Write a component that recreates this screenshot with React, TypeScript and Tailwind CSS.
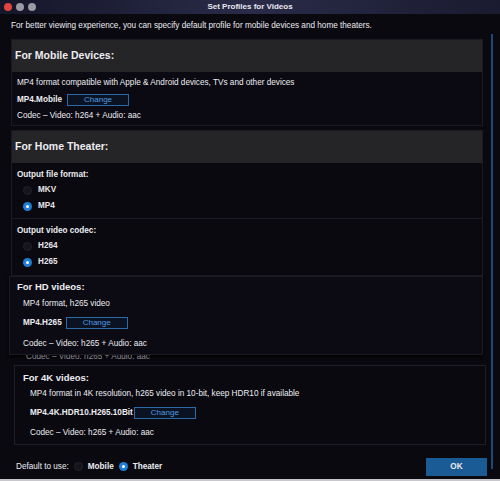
import type { FC } from 'react';

const Radio: FC<{ checked?: boolean }> = ({ checked }) =>
  checked ? (
    <span className="flex h-[9px] w-[9px] items-center justify-center rounded-full bg-[#1f7fd8]">
      <span className="h-[3px] w-[3px] rounded-full bg-white" />
    </span>
  ) : (
    <span className="h-[9px] w-[9px] rounded-full border border-[#23232c] bg-[#15141c]" />
  );

const ChangeButton: FC = () => (
  <span className="flex h-[12px] w-[62px] items-center justify-center border border-[#2b6aa6] bg-[#0b1322] text-[8px] text-[#4f9be2]">
    Change
  </span>
);

const RadioRow: FC<{ label: string; checked?: boolean }> = ({ label, checked }) => (
  <div className="flex h-[16px] items-center gap-[6px] pl-[6px]">
    <Radio checked={checked} />
    <span className="font-bold text-[#e4e4e8]">{label}</span>
  </div>
);

export default function App() {
  return (
    <div className="flex h-[481px] w-[500px] flex-col overflow-hidden bg-[#0a0910] font-['Liberation_Sans',Arial,sans-serif] text-[8.2px] text-[#ececf0]">
      {/* title bar */}
      <div className="relative flex h-[14px] shrink-0 items-center bg-gradient-to-r from-[#15162a] via-[#2a2b48] to-[#1a1b30]">
        <div className="flex gap-[4px] pl-[4px]">
          <span className="h-[8px] w-[8px] rounded-full bg-[#e0443e]" />
          <span className="h-[8px] w-[8px] rounded-full bg-[#9a9aa2]" />
          <span className="h-[8px] w-[8px] rounded-full bg-[#9a9aa2]" />
        </div>
        <span className="absolute left-0 right-0 text-center text-[8px] font-bold text-[#e8e8ee]">
          Set Profiles for Videos
        </span>
      </div>

      <div className="flex min-h-0 flex-1">
        <div className="flex min-w-0 flex-1 flex-col pl-[11px]">
          <div className="flex h-[25px] items-center">
            For better viewing experience, you can specify default profile for mobile devices and home theaters.
          </div>

          {/* mobile */}
          <div className="border border-[#1b1a22]">
            <div className="flex h-[32px] items-center bg-[#252528] pl-[3px] text-[10.5px] font-bold">
              For Mobile Devices:
            </div>
            <div className="bg-[#0b0a12] pb-[3px] pl-[5px] pt-[4px]">
              <div className="flex h-[14px] items-center">
                MP4 format compatible with Apple &amp; Android devices, TVs and other devices
              </div>
              <div className="flex h-[20px] items-center gap-[5px]">
                <span className="font-bold">MP4.Mobile</span>
                <ChangeButton />
              </div>
              <div className="flex h-[12px] items-center">Codec – Video: h264 + Audio: aac</div>
            </div>
          </div>

          {/* home theater */}
          <div className="mt-[4px] border-x border-t border-[#1b1a22]">
            <div className="flex h-[32px] items-center bg-[#252528] pl-[3px] text-[10.5px] font-bold">
              For Home Theater:
            </div>
            <div className="border-b border-[#1c1b23] pb-[4px] pl-[5px] pt-[5px]">
              <div className="flex h-[14px] items-center font-bold">Output file format:</div>
              <RadioRow label="MKV" />
              <RadioRow label="MP4" checked />
            </div>
            <div className="border-b border-[#1c1b23] pb-[5px] pl-[5px] pt-[5px]">
              <div className="flex h-[14px] items-center font-bold">Output video codec:</div>
              <RadioRow label="H264" />
              <RadioRow label="H265" checked />
            </div>
          </div>

          {/* HD */}
          <div className="-ml-[2px] border border-[#1c1b23] bg-[#0c0b13] pl-[7px] shadow-[0_2px_3px_#000]">
            <div className="flex h-[20px] items-center pt-[1px] text-[9.5px] font-bold">For HD videos:</div>
            <div className="pl-[6px]">
              <div className="flex h-[15px] items-center">MP4 format, h265 video</div>
              <div className="flex h-[22px] items-center gap-[4px]">
                <span className="font-bold">MP4.H265</span>
                <ChangeButton />
              </div>
              <div className="flex h-[20px] items-center">Codec – Video: h265 + Audio: aac</div>
            </div>
          </div>
          <div className="h-[8px] overflow-hidden pl-[15px]">
            <div className="-mt-[4px] text-[#8a8a92]">Codec – Video: h265 + Audio: aac</div>
          </div>

          {/* 4K */}
          <div className="ml-[3px] mr-[-3px] mt-[2px] border border-[#1f1e27] pl-[8px]">
            <div className="flex h-[20px] items-center pt-[4px] text-[9.5px] font-bold">For 4K videos:</div>
            <div className="pl-[7px]">
              <div className="flex h-[16px] items-center">
                MP4 format in 4K resolution, h265 video in 10-bit, keep HDR10 if available
              </div>
              <div className="flex h-[22px] items-center gap-[1px]">
                <span className="font-bold">MP4.4K.HDR10.H265.10Bit</span>
                <ChangeButton />
              </div>
              <div className="flex h-[20px] items-center pb-[1px]">Codec – Video: h265 + Audio: aac</div>
            </div>
          </div>

          {/* footer */}
          <div className="mt-auto flex h-[24px] items-center justify-between pl-[5px]">
            <div className="flex items-center gap-[5px]">
              <span>Default to use:</span>
              <Radio />
              <span className="font-bold">Mobile</span>
              <Radio checked />
              <span className="font-bold">Theater</span>
            </div>
            <span className="mr-[-4px] flex h-[18px] w-[61px] items-center justify-center bg-[#1b5b95] font-bold">
              OK
            </span>
          </div>
        </div>

        {/* scrollbar */}
        <div className="flex w-[17px] shrink-0 justify-center pb-[10px] pt-[20px]">
          <div className="w-[2px] bg-[#1c4977]" />
        </div>
      </div>
      <div className="h-[2px] shrink-0 bg-[#c8c8cc]" />
    </div>
  );
}
